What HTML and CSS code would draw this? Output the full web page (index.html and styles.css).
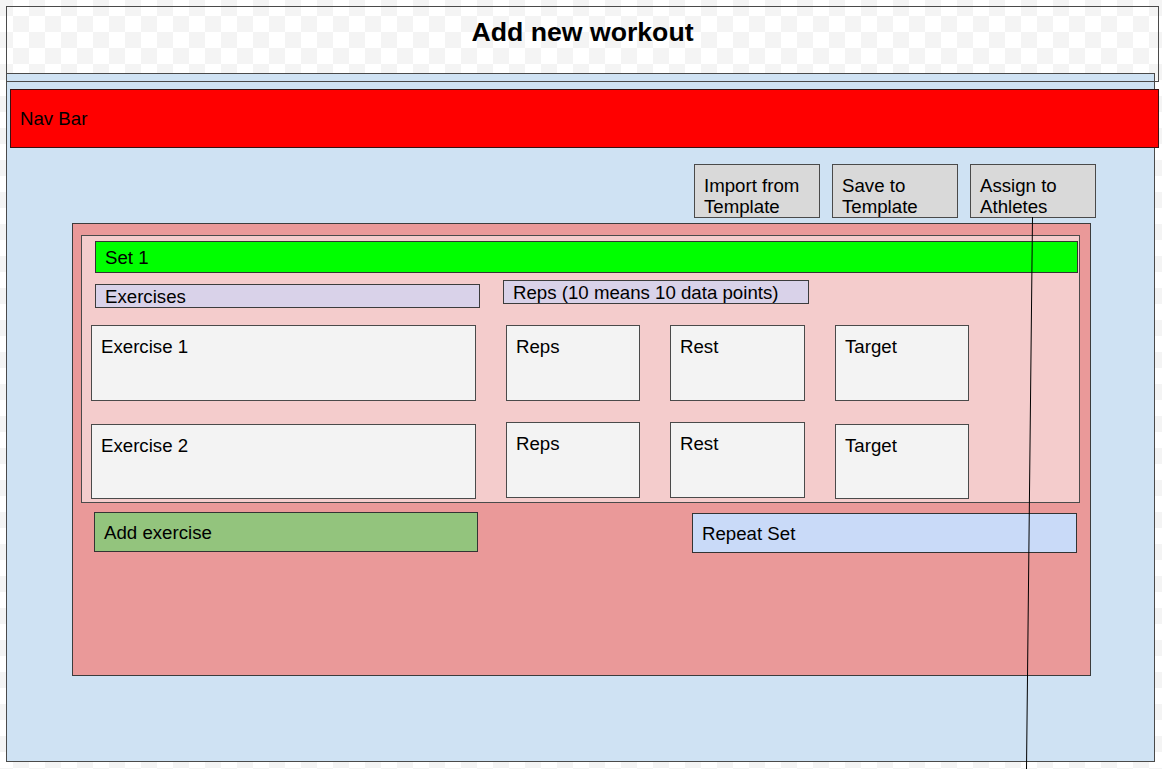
FILE: index.html
```html
<!DOCTYPE html>
<html lang="en">
<head>
<meta charset="utf-8">
<title>Add new workout</title>
<link rel="stylesheet" href="styles.css">
</head>
<body>
<div class="canvas">
  <header class="title-frame">
    <h1 class="title">Add new workout</h1>
  </header>
  <main class="page">
    <nav class="navbar">Nav Bar</nav>
    <div class="toolbar">
      <div class="tool-btn">Import from Template</div>
      <div class="tool-btn">Save to Template</div>
      <div class="tool-btn">Assign to Athletes</div>
    </div>
    <section class="workout">
      <div class="set">
        <div class="set-title">Set 1</div>
        <div class="set-headers">
          <div class="col-head col-head--exercises">Exercises</div>
          <div class="col-head col-head--reps">Reps (10 means 10 data points)</div>
        </div>
        <div class="exercise-row">
          <div class="field field--exercise">Exercise 1</div>
          <div class="field field--reps">Reps</div>
          <div class="field field--rest">Rest</div>
          <div class="field field--target">Target</div>
        </div>
        <div class="exercise-row exercise-row--second">
          <div class="field field--exercise field--low">Exercise 2</div>
          <div class="field field--reps">Reps</div>
          <div class="field field--rest">Rest</div>
          <div class="field field--target field--low">Target</div>
        </div>
      </div>
      <div class="set-actions">
        <div class="action action--add">Add exercise</div>
        <div class="action action--repeat">Repeat Set</div>
      </div>
    </section>
  </main>
  <svg class="connector" width="1162" height="769" viewBox="0 0 1162 769" aria-hidden="true">
    <line x1="1032.5" y1="217" x2="1026.5" y2="769" stroke="#000" stroke-width="1"/>
  </svg>
</div>
</body>
</html>
```
FILE: styles.css
```css
* {
  box-sizing: border-box;
}

html,
body {
  margin: 0;
  padding: 0;
  width: 1162px;
  height: 769px;
  overflow: hidden;
}

body {
  font-family: "Liberation Sans", Arial, sans-serif;
  font-size: 18.67px;
  line-height: 21px;
  color: #000;
  background-color: #ffffff;
  background-image: repeating-conic-gradient(#ffffff 0 25%, #f4f4f4 0 50%);
  background-size: 32px 32px;
  background-position: -3px 0;
}

.canvas {
  position: relative;
  width: 1162px;
  height: 769px;
  padding: 6px 0 0 6px;
}

/* Title frame (transparent, drawn over the page frame) */
.title-frame {
  position: relative;
  z-index: 2;
  width: 1153px;
  height: 76px;
  border: 1px solid #4a4a4a;
  padding-top: 10px;
}

.title {
  margin: 0;
  font-size: 26.67px;
  line-height: 30px;
  font-weight: bold;
  text-align: center;
}

/* Page frame */
.page {
  position: relative;
  z-index: 1;
  margin-top: -9px;
  width: 1149px;
  height: 689px;
  background: #cfe2f3;
  border: 1px solid #4a4a4a;
  padding-top: 15px;
}

.navbar {
  margin-left: 3px;
  width: 1149px;
  height: 59px;
  background: #ff0000;
  border: 1px solid #3a1010;
  display: flex;
  align-items: center;
  padding-left: 9px;
}

.toolbar {
  display: flex;
  gap: 12px;
  margin-top: 16px;
  margin-left: 687px;
}

.tool-btn {
  width: 126px;
  height: 54px;
  background: #d9d9d9;
  border: 1px solid #4a4a4a;
  padding: 10px 9px 0;
  line-height: 21px;
}

/* Workout container */
.workout {
  margin-top: 5px;
  margin-left: 65px;
  width: 1019px;
  height: 453px;
  background: #ea9999;
  border: 1px solid #3c3c3c;
  padding-top: 11px;
}

.set {
  margin-left: 8px;
  width: 999px;
  background: #f4cccc;
  border: 1px solid #4a4a4a;
  padding: 5px 0 3px;
}

.set-title {
  margin-left: 13px;
  width: 983px;
  height: 32px;
  background: #00ff00;
  border: 1px solid #333;
  display: flex;
  align-items: center;
  padding-left: 9px;
}

.set-headers {
  display: flex;
  align-items: flex-start;
  gap: 23px;
  margin-top: 7px;
  margin-left: 13px;
  height: 28px;
}

.col-head {
  height: 24px;
  background: #d9d2e9;
  border: 1px solid #3c3c3c;
  display: flex;
  align-items: center;
  padding-left: 9px;
}

.col-head--exercises {
  width: 385px;
  margin-top: 4px;
}

.col-head--reps {
  width: 306px;
}

.exercise-row {
  display: grid;
  grid-template-columns: 385px 134px 135px 134px;
  column-gap: 30px;
  align-items: start;
  margin-top: 17px;
  margin-left: 9px;
}

.exercise-row--second {
  margin-top: 21px;
}

.field {
  height: 76px;
  background: #f3f3f3;
  border: 1px solid #4a4a4a;
  padding: 10px 9px 0;
}

.field--low {
  margin-top: 2px;
  height: 75px;
}

/* Actions under the set */
.set-actions {
  display: flex;
  align-items: flex-start;
  gap: 214px;
  margin-top: 9px;
  margin-left: 21px;
}

.action {
  width: 384px;
  height: 40px;
  border: 1px solid #333;
  display: flex;
  align-items: center;
  padding-left: 9px;
}

.action--add {
  background: #93c47d;
}

.action--repeat {
  width: 385px;
  margin-top: 1px;
  background: #c9daf8;
}

/* Connector line drawn on top of everything */
.connector {
  position: absolute;
  left: 0;
  top: 0;
  z-index: 5;
  pointer-events: none;
}
```
